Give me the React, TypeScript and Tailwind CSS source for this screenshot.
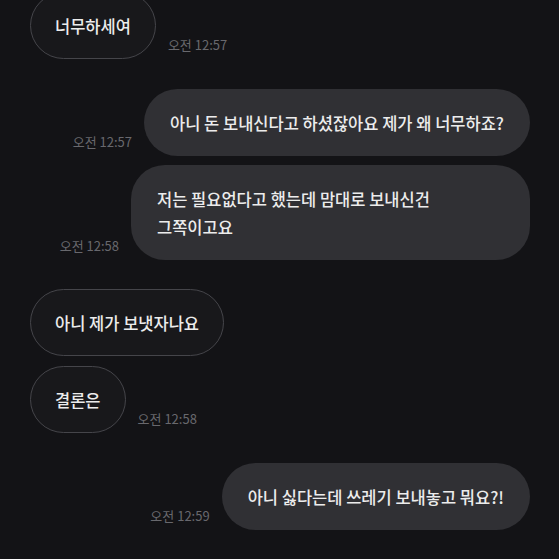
import React from "react";

const font = { fontFamily: '"Noto Sans CJK KR", "Noto Sans", sans-serif' };

function Time({ t }: { t: string }) {
  return <span className="text-[13px] leading-[14px] text-[#68686d] mb-[7px] whitespace-nowrap">{t}</span>;
}

function Received({ text, time, className = "" }: { text: React.ReactNode; time?: string; className?: string }) {
  return (
    <div className={"flex items-end gap-[12px] " + className}>
      <div className="rounded-[34px] border border-[#45454a] bg-[#18181b] px-[24px] py-[18.5px] text-[16.5px] font-medium leading-[28px] text-[#ececec] whitespace-nowrap">
        {text}
      </div>
      {time && <Time t={time} />}
    </div>
  );
}

function Sent({ text, time, className = "", boxClass = "" }: { text: React.ReactNode; time?: string; className?: string; boxClass?: string }) {
  return (
    <div className={"flex items-end justify-end gap-[12px] " + className}>
      {time && <Time t={time} />}
      <div className={"rounded-[34px] bg-[#303034] px-[26px] py-[19.5px] text-[16.5px] font-medium leading-[28px] text-[#ececec] whitespace-nowrap " + boxClass}>
        {text}
      </div>
    </div>
  );
}

export default function App() {
  return (
    <div className="w-[559px] h-[559px] overflow-hidden bg-[#131316]" style={font}>
      <div className="flex flex-col pl-[30px] pr-[29px] -mt-[8px]">
        <Received text="너무하세여" time="오전 12:57" />
        <Sent className="mt-[30px]" text="아니 돈 보내신다고 하셨잖아요 제가 왜 너무하죠?" time="오전 12:57" />
        <Sent
          className="mt-[9px]"
          boxClass="w-[399px]"
          text={
            <>
              저는 필요없다고 했는데 맘대로 보내신건
              <br />
              그쪽이고요
            </>
          }
          time="오전 12:58"
        />
        <Received className="mt-[29px]" text="아니 제가 보냇자나요" />
        <Received className="mt-[10px]" text="결론은" time="오전 12:58" />
        <Sent className="mt-[30px]" text="아니 싫다는데 쓰레기 보내놓고 뭐요?!" time="오전 12:59" />
      </div>
    </div>
  );
}
